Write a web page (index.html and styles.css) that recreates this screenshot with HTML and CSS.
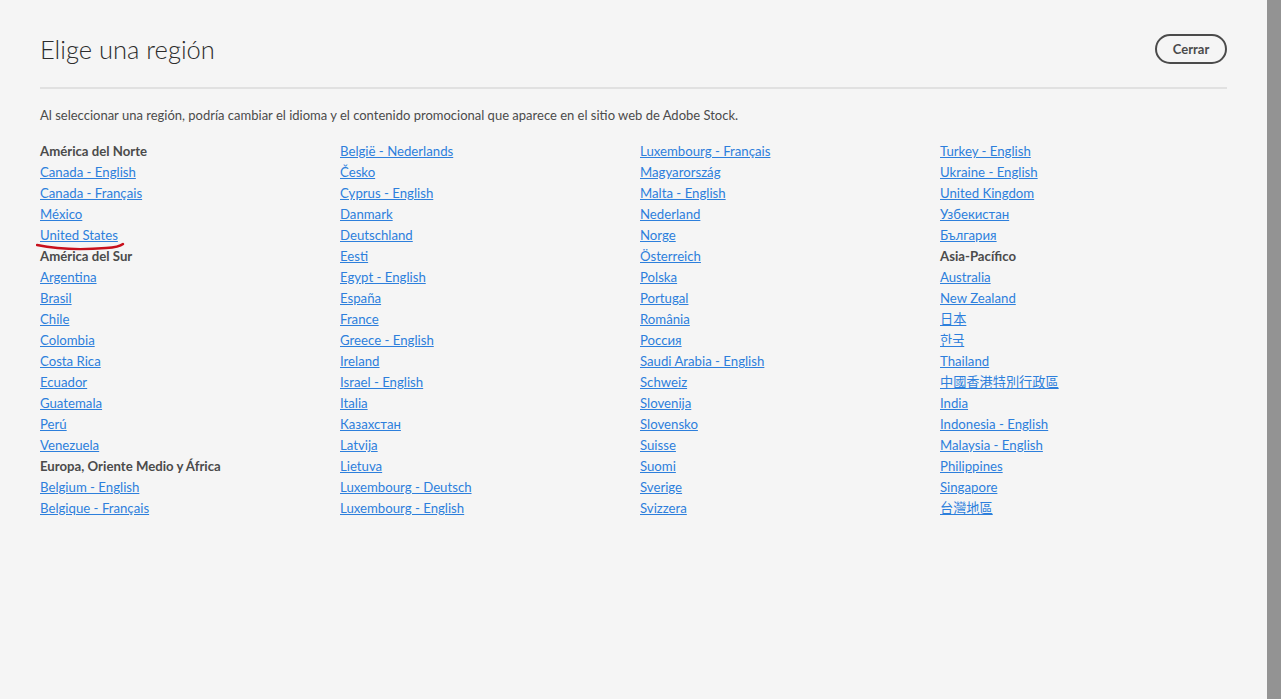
FILE: index.html
```html
<!DOCTYPE html>
<html lang="es">
<head>
<meta charset="UTF-8">
<title>Elige una región</title>
<link rel="stylesheet" href="styles.css">
</head>
<body>
<div class="modal">
<div class="modal-header">
<h1>Elige una región</h1>
<button class="close-button">Cerrar</button>
</div>

<p class="intro">Al seleccionar una región, podría cambiar el idioma y el contenido promocional que aparece en el sitio web de Adobe Stock.</p>

<ul class="regions">
<li class="region-title">América del Norte</li>
<li><a href="#">Canada - English</a></li>
<li><a href="#">Canada - Français</a></li>
<li><a href="#">México</a></li>
<li class="marked"><a href="#">United States</a>
<svg class="scribble" width="92" height="12" viewBox="0 0 92 12"><path d="M1 4 C 20 8, 45 9, 70 7 C 78 6.5, 84 5.5, 87 3" fill="none" stroke="#c8101c" stroke-width="2.4" stroke-linecap="round"/></svg>
</li>
<li class="region-title">América del Sur</li>
<li><a href="#">Argentina</a></li>
<li><a href="#">Brasil</a></li>
<li><a href="#">Chile</a></li>
<li><a href="#">Colombia</a></li>
<li><a href="#">Costa Rica</a></li>
<li><a href="#">Ecuador</a></li>
<li><a href="#">Guatemala</a></li>
<li><a href="#">Perú</a></li>
<li><a href="#">Venezuela</a></li>
<li class="region-title">Europa, Oriente Medio y África</li>
<li><a href="#">Belgium - English</a></li>
<li><a href="#">Belgique - Français</a></li>

<li><a href="#">België - Nederlands</a></li>
<li><a href="#">Česko</a></li>
<li><a href="#">Cyprus - English</a></li>
<li><a href="#">Danmark</a></li>
<li><a href="#">Deutschland</a></li>
<li><a href="#">Eesti</a></li>
<li><a href="#">Egypt - English</a></li>
<li><a href="#">España</a></li>
<li><a href="#">France</a></li>
<li><a href="#">Greece - English</a></li>
<li><a href="#">Ireland</a></li>
<li><a href="#">Israel - English</a></li>
<li><a href="#">Italia</a></li>
<li><a href="#">Казахстан</a></li>
<li><a href="#">Latvija</a></li>
<li><a href="#">Lietuva</a></li>
<li><a href="#">Luxembourg - Deutsch</a></li>
<li><a href="#">Luxembourg - English</a></li>

<li><a href="#">Luxembourg - Français</a></li>
<li><a href="#">Magyarország</a></li>
<li><a href="#">Malta - English</a></li>
<li><a href="#">Nederland</a></li>
<li><a href="#">Norge</a></li>
<li><a href="#">Österreich</a></li>
<li><a href="#">Polska</a></li>
<li><a href="#">Portugal</a></li>
<li><a href="#">România</a></li>
<li><a href="#">Россия</a></li>
<li><a href="#">Saudi Arabia - English</a></li>
<li><a href="#">Schweiz</a></li>
<li><a href="#">Slovenija</a></li>
<li><a href="#">Slovensko</a></li>
<li><a href="#">Suisse</a></li>
<li><a href="#">Suomi</a></li>
<li><a href="#">Sverige</a></li>
<li><a href="#">Svizzera</a></li>

<li><a href="#">Turkey - English</a></li>
<li><a href="#">Ukraine - English</a></li>
<li><a href="#">United Kingdom</a></li>
<li><a href="#">Узбекистан</a></li>
<li><a href="#">България</a></li>
<li class="region-title">Asia-Pacífico</li>
<li><a href="#">Australia</a></li>
<li><a href="#">New Zealand</a></li>
<li><a href="#">日本</a></li>
<li><a href="#">한국</a></li>
<li><a href="#">Thailand</a></li>
<li><a href="#">中國香港特別行政區</a></li>
<li><a href="#">India</a></li>
<li><a href="#">Indonesia - English</a></li>
<li><a href="#">Malaysia - English</a></li>
<li><a href="#">Philippines</a></li>
<li><a href="#">Singapore</a></li>
<li><a href="#">台灣地區</a></li>
</ul>
</div>
</body>
</html>
```

FILE: styles.css
```css
html, body {
margin: 0;
height: 100%;
}

body {
background-color: #939393;
font-family: Lato, "Noto Sans CJK TC", sans-serif;
color: #4b4b4b;
}

.modal {
width: 1187px;
height: 100%;
padding: 0 40px;
background-color: #f5f5f5;
}

.modal-header {
display: flex;
justify-content: space-between;
align-items: center;
padding: 29px 0 18px;
border-bottom: 2px solid #e1e1e1;
}

h1 {
margin: 0;
font-size: 25.5px;
font-weight: 300;
line-height: 40px;
color: #2c2c2c;
}

.close-button {
width: 72px;
height: 30px;
border: 2px solid #4b4b4b;
border-radius: 15px;
background: transparent;
font-family: Lato, sans-serif;
font-size: 13px;
font-weight: 700;
color: #4b4b4b;
cursor: pointer;
}

.intro {
margin: 16px 0 16px;
font-size: 13px;
line-height: 20px;
color: #4b4b4b;
}

.regions {
list-style: none;
margin: 0;
padding: 0;
width: 1200px;
column-count: 4;
column-gap: 0;
font-size: 13.2px;
line-height: 21px;
}

.regions li {
break-inside: avoid;
}

.region-title {
font-weight: 700;
color: #4b4b4b;
}

.regions a {
color: #2d7fdc;
text-decoration: underline;
}

.marked {
position: relative;
}

.scribble {
position: absolute;
left: -4px;
top: 16px;
}
```
